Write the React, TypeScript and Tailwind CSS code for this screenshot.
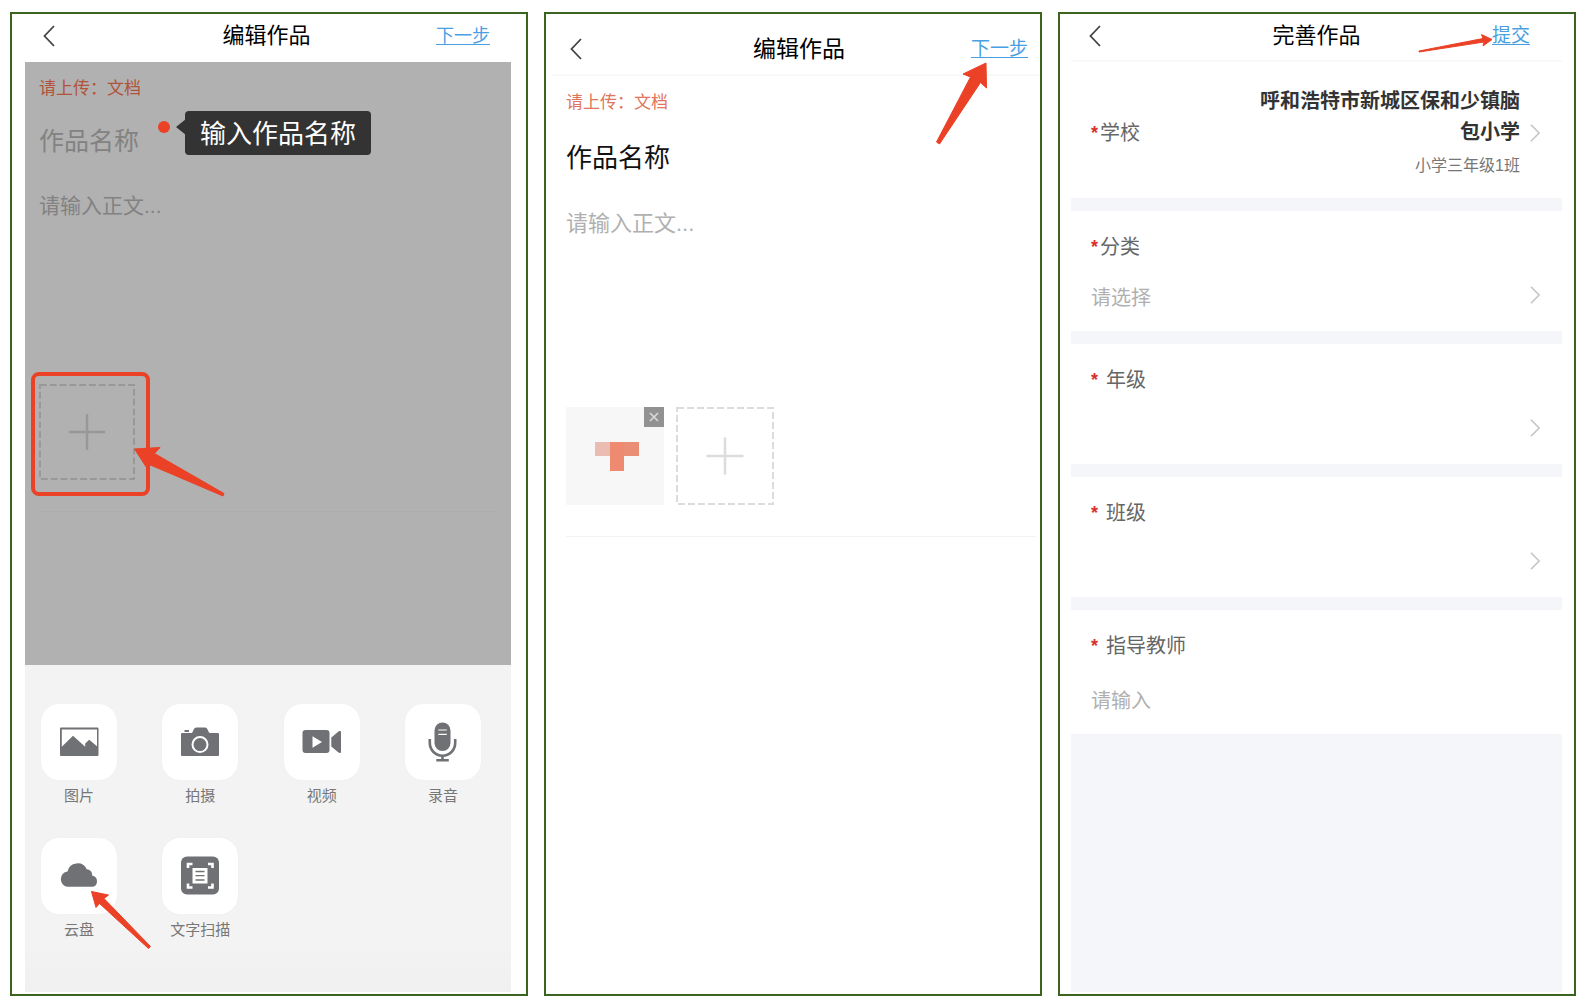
import type { ReactNode } from 'react';
import { clsx } from 'clsx';

const pickers = [
  { id: 'category', label: '分类', placeholder: '请选择', gap: 'gap-0.5' },
  { id: 'grade', label: '年级', placeholder: '', gap: 'gap-2' },
  { id: 'class', label: '班级', placeholder: '', gap: 'gap-2' },
];

const attachments = [
  { label: '图片', icon: <ImageIcon /> },
  { label: '拍摄', icon: <CameraIcon /> },
  { label: '视频', icon: <VideoIcon /> },
  { label: '录音', icon: <MicIcon /> },
  { label: '云盘', icon: <CloudIcon />, highlighted: true },
  { label: '文字扫描', icon: <ScanIcon /> },
];

/* ---------- Icons ---------- */

function TileSvg({ children }: { children: ReactNode }) {
  return (
    <svg viewBox="0 0 76 76" className="size-[76px]" fill="#707175" aria-hidden="true">
      {children}
    </svg>
  );
}

function ImageIcon() {
  return (
    <TileSvg>
      <path
        fillRule="evenodd"
        d="M20 23.5h36.5a1 1 0 0 1 1 1V51a1 1 0 0 1-1 1H20a1 1 0 0 1-1-1V24.500a1 1 0 0 1 1-1Zm.8 2v17.200L32 31.700l12.200 11 0-3.200 4-3.800 7.800 6.500V25.500Z"
      />
    </TileSvg>
  );
}

function CameraIcon() {
  return (
    <TileSvg>
      <path d="M20 29h9.500c1.600 0 1.800-5.500 5-5.500h8.500c3 0 3.200 5.500 5 5.500H56a1 1 0 0 1 1 1v21a1 1 0 0 1-1 1H20a1 1 0 0 1-1-1V30a1 1 0 0 1 1-1Z" />
      <rect x="22.500" y="26" width="4.500" height="2" rx="0.500" />
      <circle cx="38" cy="40.600" r="7.500" fill="none" stroke="white" strokeWidth="2" />
    </TileSvg>
  );
}

function VideoIcon() {
  return (
    <TileSvg>
      <rect x="18.500" y="26" width="27" height="23" rx="3" />
      <path d="M28.500 32.200 38 38l-9.500 5.800Z" fill="white" />
      <path d="M47.300 33.500 54.500 27.500c1-.8 2.500-.5 2.500.5v20c0 1-1.500 1.300-2.500.5L47.300 42.500Z" />
    </TileSvg>
  );
}

function MicIcon() {
  return (
    <TileSvg>
      <rect x="29.500" y="18.500" width="16" height="28.500" rx="8" />
      <path
        d="M24.800 35v4a12.700 12.700 0 0 0 25.400 0v-4M37.500 51.500v4.500M31.300 56.300h12.500"
        fill="none"
        stroke="#707175"
        strokeWidth="2.600"
      />
      <path d="M33.300 26h8.500M33.300 30.300h8.500" stroke="white" strokeWidth="1.200" />
    </TileSvg>
  );
}

function CloudIcon() {
  return (
    <TileSvg>
      <path d="M26.800 48.800a7.700 7.700 0 0 1-.3-15.300 10.200 10.200 0 0 1 19.200-2.300 6 6 0 0 1 5.600 6.600 5.600 5.600 0 0 1 .3 11Z" />
    </TileSvg>
  );
}

function ScanIcon() {
  return (
    <TileSvg>
      <rect x="19" y="18.500" width="38" height="38" rx="6" />
      <path
        d="M26 30v-4h4.500M46 26h4.500v4M50.500 45.500v4H46M30.500 49.500H26v-4"
        fill="none"
        stroke="white"
        strokeWidth="2.600"
      />
      <rect x="30.500" y="30" width="15" height="15.500" fill="white" />
      <path d="M33.500 33.500h9M33.500 37.700h9M33.500 42h9" stroke="#707175" strokeWidth="1.300" />
    </TileSvg>
  );
}

function Chevron({ className, d }: { className: string; d: string }) {
  return (
    <svg
      viewBox="0 0 12 22"
      fill="none"
      stroke="currentColor"
      strokeWidth="1.800"
      className={className}
      aria-hidden="true"
    >
      <path d={d} />
    </svg>
  );
}

/* Red pointer drawn over a screen; the box is placed by the caller */
function Pointer({ className, viewBox, points }: { className: string; viewBox: string; points: string }) {
  return (
    <svg
      viewBox={viewBox}
      className={clsx('pointer-events-none absolute z-10 max-w-none', className)}
      fill="#eb4126"
      stroke="#eb4126"
      strokeLinejoin="round"
      aria-hidden="true"
    >
      <polygon points={points} />
    </svg>
  );
}

function AddIcon({ className }: { className: string }) {
  return (
    <svg viewBox="0 0 98 98" fill="none" stroke="currentColor" className={className} aria-hidden="true">
      <rect x="1" y="1" width="96" height="96" strokeWidth="2" strokeDasharray="7 3" />
      <path d="M49 30.500v37M30.500 49h37" strokeWidth="2.500" />
    </svg>
  );
}

/* ---------- Shared parts ---------- */

function Header({
  title,
  action,
  className,
  titleClass = 'text-[22px]',
  actionClass = 'text-lg',
  children,
}: {
  title: string;
  action: string;
  className: string;
  titleClass?: string;
  actionClass?: string;
  children?: ReactNode;
}) {
  return (
    <header className={clsx('grid grid-cols-[1fr_auto_1fr] items-center', className)}>
      <button type="button" aria-label="返回" className="w-3 text-[#444]">
        <Chevron className="h-[22px] w-3" d="M11 1 1.500 11l9.500 10" />
      </button>
      <h2 className={clsx('leading-8 text-black', titleClass)}>{title}</h2>
      <div className={clsx('relative justify-self-end leading-6', actionClass)}>
        <a href="#next" className="text-[#4a9fe3] underline underline-offset-2">
          {action}
        </a>
        {children}
      </div>
    </header>
  );
}

function RequiredLabel({ htmlFor, gap, children }: { htmlFor: string; gap: string; children: ReactNode }) {
  return (
    <label htmlFor={htmlFor} className={clsx('flex text-xl leading-8 text-[#666]', gap)}>
      <span className="text-lg leading-8 font-bold text-[#d9302c]">*</span>
      {children}
    </label>
  );
}

/* ---------- Screens ---------- */

function UploadScreen() {
  return (
    <section className="flex flex-col border-2 border-[#3d6321] pr-[15px] pb-0.5 pl-[13px]">
      <Header title="编辑作品" action="下一步" className="h-12 pr-[21px] pb-1 pl-[18px]" />

      <div className="flex flex-1 flex-col bg-[#b1b1b1] px-[14px] pt-[15px]">
        <p className="text-[17px] leading-6 text-[#b2533b]">请上传：文档</p>
        <div className="relative mt-5">
          <input
            aria-label="作品名称"
            placeholder="作品名称"
            className="block h-10 w-full text-[25px] outline-none placeholder:text-[#828282]"
          />
          <span className="absolute top-0 left-[119px] size-3 rounded-full bg-[#eb4126]" />
          <div
            role="tooltip"
            className="absolute -top-2.5 left-[146px] h-11 rounded-[4px] bg-[#333] px-[15px] text-[26px] leading-[46px] whitespace-nowrap text-white"
          >
            <svg viewBox="0 0 10 16" className="absolute top-2 -left-[9px] h-4 w-2.5" fill="#333" aria-hidden="true">
              <path d="M0 8 10 0v16Z" />
            </svg>
            输入作品名称
          </div>
        </div>
        <textarea
          aria-label="正文"
          placeholder="请输入正文..."
          className="mt-[29px] block h-[194px] w-full resize-none text-[21px] leading-8 outline-none placeholder:text-[#828282]"
        />

        <div className="relative w-24">
          <button type="button" aria-label="添加附件" className="block text-[#989898]">
            <AddIcon className="size-24" />
          </button>
          <div className="pointer-events-none absolute -inset-x-2 -top-3 h-[124px] w-[119px] rounded-lg border-4 border-[#eb4126]" />
          <Pointer
            className="top-[60px] left-[94px] h-[54px] w-[94px]"
            viewBox="0 0 94 54"
            points="1.500,5 27,3.500 21.500,9.500 91,49.500 90,52 17.500,21 14.500,25"
          />
        </div>
        <hr className="mt-[31px] border-[#adadad]" />
      </div>

      <div className="grid grid-cols-[repeat(4,76px)] justify-between gap-y-[26px] bg-linear-to-b from-[#f3f3f3] from-85% to-[#f0f0f0] pt-[39px] pr-[30px] pb-[46px] pl-4">
        {attachments.map((item) => (
          <button key={item.label} type="button" className="relative text-[15px] leading-8 text-[#777]">
            <span className="block rounded-[18px] bg-white shadow-[0_0_1px_#e4e4e4]">{item.icon}</span>
            <span className="block">{item.label}</span>
            {item.highlighted && (
              <Pointer
                className="top-[51px] left-[49px] h-[62px] w-[62px]"
                viewBox="0 0 62 62"
                points="1.500,2.500 18.500,6 14,9.500 60.500,57.500 58.500,59.500 9.500,14.500 6,18.500"
              />
            )}
          </button>
        ))}
      </div>
    </section>
  );
}

function EditScreen() {
  return (
    <section className="border-2 border-[#3d6321] pl-1.5">
      <Header
        title="编辑作品"
        action="下一步"
        className="h-[62px] border-b-2 border-[#f9f9f9] pt-2.5 pr-3 pl-[18px]"
        titleClass="text-[23px]"
        actionClass="text-[19px]"
      >
        <Pointer
          className="top-[23px] right-[39px] h-[86px] w-[54px]"
          viewBox="0 0 54 86"
          points="51,3 28,14 35.500,17 1.500,82 4.500,84 45.500,22.500 51.500,28"
        />
      </Header>

      <div className="pt-[15px] pl-[14px]">
        <p className="text-[17px] leading-6 text-[#e0745c]">请上传：文档</p>
        <input
          aria-label="作品名称"
          defaultValue="作品名称"
          className="mt-5 block h-10 w-full text-[26px] text-[#111] outline-none"
        />
        <textarea
          aria-label="正文"
          placeholder="请输入正文..."
          className="mt-[33px] block h-[199px] w-full resize-none text-[22px] leading-8 outline-none placeholder:text-[#b0b0b0]"
        />

        <div className="flex gap-3">
          <div className="relative size-[98px] bg-[#f7f7f7]">
            <svg viewBox="0 0 98 98" className="size-full" shapeRendering="crispEdges" aria-hidden="true">
              <rect x="29" y="35" width="15" height="14" fill="#ebbcb1" />
              <rect x="44" y="35" width="14" height="29" fill="#ed8a70" />
              <rect x="58" y="35" width="15" height="14" fill="#ea8e76" />
            </svg>
            <button
              type="button"
              aria-label="删除"
              className="absolute top-0 right-0 flex size-5 items-center justify-center bg-[#929292] text-[#ddd]"
            >
              <svg viewBox="0 0 10 10" className="size-2.5" stroke="currentColor" strokeWidth="1.500" aria-hidden="true">
                <path d="m1 1 8 8M9 1 1 9" />
              </svg>
            </button>
          </div>
          <button type="button" aria-label="添加附件" className="block text-[#dcdcdc]">
            <AddIcon className="size-[98px]" />
          </button>
        </div>
        <hr className="mt-[31px] mr-1 border-[#f3f3f3]" />
      </div>
    </section>
  );
}

function SubmitScreen() {
  return (
    <section className="flex flex-col border-2 border-[#3d6321] pr-3 pb-0.5 pl-[11px]">
      <Header
        title="完善作品"
        action="提交"
        className="h-12 border-b-2 border-[#f9f9f9] px-[18px] pb-0.5"
        actionClass="mr-[14px] text-[19px]"
      >
        <Pointer
          className="top-2 right-9 h-6 w-[78px]"
          viewBox="0 0 78 24"
          points="76,7.500 65.500,2.500 67,6.500 3,19 3,20 68,10 67,14"
        />
      </Header>

      <form className="flex flex-1 flex-col gap-[13px] bg-[#f4f6fa]">
        <div className="flex items-center justify-between bg-white pt-6 pr-[22px] pb-[18px] pl-5">
          <RequiredLabel htmlFor="school" gap="gap-0.5">
            学校
          </RequiredLabel>
          <button id="school" type="button" className="flex items-center gap-2.5 text-right">
            <span className="w-[270px]">
              <span className="block text-xl leading-[31px] font-bold text-[#333]">
                呼和浩特市新城区保和少镇脑包小学
              </span>
              <span className="mt-1 block text-base leading-7 text-[#777]">小学三年级1班</span>
            </span>
            <Chevron className="h-[18px] w-2.5 text-[#c4c4c4]" d="m1 1 10 10L1 21" />
          </button>
        </div>

        {pickers.map(({ id, label, placeholder, gap }) => (
          <div key={id} className="h-[120px] bg-white pt-5 pr-[22px] pl-5">
            <RequiredLabel htmlFor={id} gap={gap}>
              {label}
            </RequiredLabel>
            <div className="mt-3 flex items-center">
              <select
                id={id}
                defaultValue=""
                className="h-10 flex-1 appearance-none pt-1.5 text-xl leading-8 text-[#b0b0b0] outline-none"
              >
                <option value="">{placeholder}</option>
              </select>
              <Chevron className="h-[18px] w-2.5 text-[#c4c4c4]" d="m1 1 10 10L1 21" />
            </div>
          </div>
        ))}

        <div className="h-[124px] bg-white px-5 pt-5">
          <RequiredLabel htmlFor="teacher" gap="gap-2">
            指导教师
          </RequiredLabel>
          <input
            id="teacher"
            placeholder="请输入"
            className="mt-[23px] block h-8 w-full text-xl outline-none placeholder:text-[#b0b0b0]"
          />
        </div>
      </form>
    </section>
  );
}

export default function App() {
  return (
    <main className="grid min-h-screen grid-cols-[518fr_498fr_518fr] gap-4 bg-white pt-3 pr-3 pb-2 pl-2.5 font-['Liberation_Sans','Noto_Sans_CJK_SC',sans-serif]">
      <UploadScreen />
      <EditScreen />
      <SubmitScreen />
    </main>
  );
}
